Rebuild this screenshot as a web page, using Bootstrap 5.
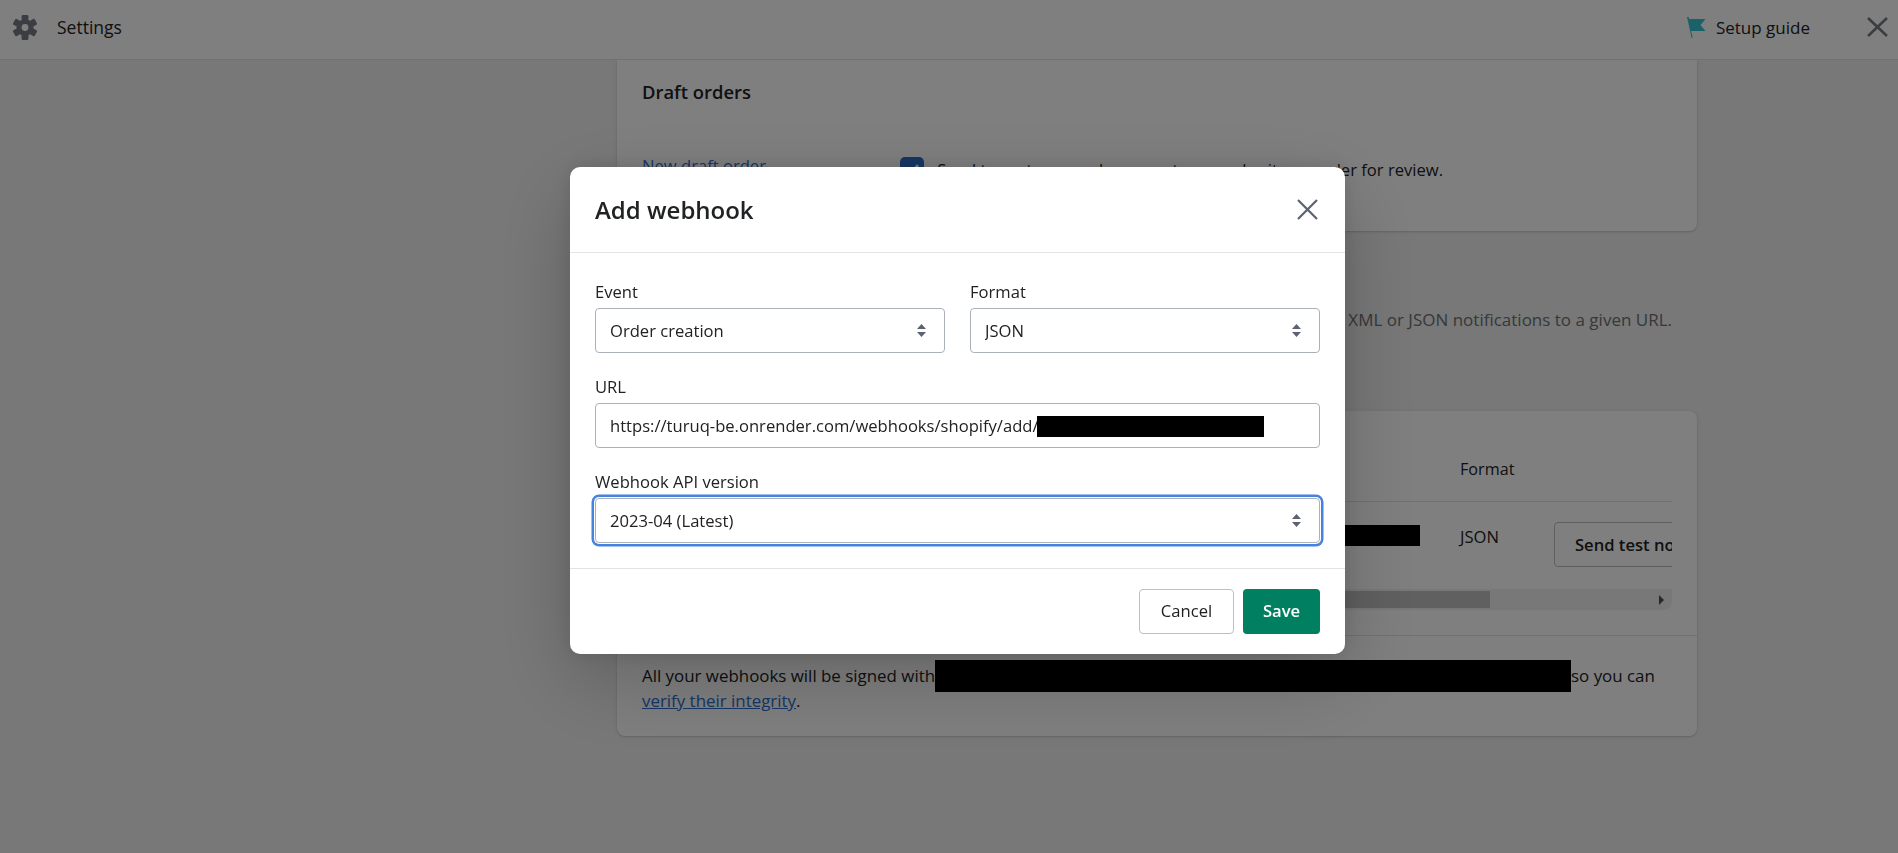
<!DOCTYPE html>
<html lang="en">
<head>
    <meta charset="UTF-8">
    <meta name="viewport" content="width=device-width, initial-scale=1.0">
    <title>Settings</title>
    <link href="https://cdn.jsdelivr.net/npm/bootstrap@5.3.3/dist/css/bootstrap.min.css" rel="stylesheet">
    <style>
        body {
            background: #f0f0f0;
            color: #202223;
            font-family: "Open Sans", "Liberation Sans", sans-serif;
            font-size: 16.6px;
            line-height: 25px;
            overflow: hidden;
            height: 100vh;
        }
        .top-bar {
            height: 60px;
            background: #fff;
            border-bottom: 1px solid #e1e3e5;
            padding: 0 10px 5px 13px;
            position: relative;
            z-index: 1;
        }
        .top-title { margin-left: 20px; font-size: 17.5px; }
        .setup-link { margin-right: 57px; font-size: 17px; }
        .setup-link svg { margin-right: 10px; }
        .settings-col { margin-left: 617px; width: 1080px; }
        .pane {
            background: #fff;
            box-shadow: 0 0 5px rgba(23, 24, 24, .05), 0 1px 2px rgba(0, 0, 0, .15);
            border-radius: 8px;
        }
        .pane-draft { height: 171px; padding: 19px 25px; border-radius: 0 0 8px 8px; }
        .pane-title { font-size: 18.4px; font-weight: 600; line-height: 25px; }
        .draft-row { margin-top: 49px; white-space: nowrap; }
        .draft-link { width: 258px; color: #2c6ecb; }
        .draft-check {
            width: 24px;
            height: 24px;
            border-radius: 5px;
            background: #2c6ecb;
            margin-right: 11px;
            margin-top: 4px;
            flex: none;
            line-height: 0;
        }
        .draft-copy { margin-top: 4px; width: 508px; text-align: right; }
        .intro-band { height: 180px; padding: 76px 25px 0; }
        .intro-copy { color: #6d7175; white-space: nowrap; font-size: 17px; }
        .pane-hooks { height: 325px; }
        .hook-table-wrap { margin: 0 25px; padding-top: 41px; overflow: hidden; height: 199px; position: relative; }
        .hook-table { table-layout: fixed; width: 1200px; margin: 0; --bs-table-bg: transparent; }
        .hook-table th, .hook-table td { padding: 0; border: 0; font-weight: 400; color: #202223; }
        .hook-table thead th { height: 49px; vertical-align: top; padding-top: 5px; border-bottom: 1px solid #e1e3e5; font-size: 16.2px; }
        .hook-table tbody td { padding-top: 22px; vertical-align: top; }
        .hook-table tbody td.cell-url { padding-top: 23px; padding-right: 40px; text-align: right; }
        .hook-table tbody td.cell-send { padding-top: 20px; }
        .redact-cell { display: inline-block; width: 300px; height: 21px; background: #000; vertical-align: top; }
        .send-btn {
            width: 240px;
            height: 45px;
            border: 1px solid #babfc3;
            border-radius: 4px;
            background: #fff;
            font-weight: 600;
            font-size: 16.6px;
            color: #202223;
            text-align: left;
            padding: 2px 20px 0;
            white-space: nowrap;
        }
        .fake-scroll {
            position: absolute;
            left: 0;
            right: 0;
            bottom: 0;
            height: 21px;
            background: #f1f1f1;
            border-radius: 0 0 8px 0;
            padding: 2px 0;
        }
        .fake-thumb { width: 848px; height: 17px; background: #c1c1c1; }
        .fake-arrow {
            position: absolute;
            right: 8px;
            top: 6px;
            border-left: 5px solid #505050;
            border-top: 5px solid transparent;
            border-bottom: 5px solid transparent;
        }
        .signed-note { border-top: 1px solid #e1e3e5; margin-top: 25px; padding: 27px 25px 0; font-size: 16.9px; line-height: 25px; white-space: nowrap; }
        .redact-key { display: inline-block; width: 636px; height: 32px; margin: -3.5px 0; background: #000; vertical-align: top; }
        .signed-note a { color: #2c6ecb; }

        .modal-dialog.hook-dialog { max-width: none; width: 775px; margin: 167px 0 0 570px; }
        .hook-modal {
            border: 0;
            border-radius: 10px;
            box-shadow: 0 26px 80px rgba(0, 0, 0, .2), 0 0 20px rgba(0, 0, 0, .12);
            font-size: 16.6px;
            line-height: 24px;
        }
        .hook-modal .modal-header { height: 86px; padding: 0 25px; border-bottom: 1px solid #e1e3e5; }
        .hook-modal .modal-title { font-size: 24px; font-weight: 600; color: #202223; line-height: 32px; }
        .hook-close { line-height: 0; margin-right: 2px; }
        .hook-modal .modal-body { padding: 27px 25px 25px; }
        .form-pair { gap: 25px; }
        .hook-label { display: block; margin: 0 0 4px; color: #202223; line-height: 24px; }
        .hook-field {
            height: 45px;
            border: 1px solid #abb1ba;
            border-radius: 4px;
            color: #202223;
            font-size: 16.6px;
            line-height: 24px;
            padding: 0 40px 0 14px;
        }
        select.hook-field {
            background-image: url("data:image/svg+xml,%3Csvg xmlns='http://www.w3.org/2000/svg' viewBox='0 0 9 13'%3E%3Cpath fill='%235c6270' d='M4.5 0 9 5H0zM4.5 13 0 8h9z'/%3E%3C/svg%3E");
            background-size: 9px 13px;
            background-position: right 18px center;
        }
        .hook-field:focus { border-color: #abb1ba; box-shadow: none; }
        select.hook-focus, select.hook-focus:focus { box-shadow: 0 0 0 1px #fff, 0 0 0 3.5px #4583de; border-color: #abb1ba; }
        .field-gap { margin-top: 22px; }
        .redact-url { position: absolute; left: 442px; top: 13px; width: 227px; height: 21px; background: #000; }
        .hook-modal .modal-footer { height: 86px; padding: 0 25px; border-top: 1px solid #e1e3e5; gap: 9px; }
        .hook-modal .modal-footer > * { margin: 0; }
        .btn-cancel {
            width: 95px;
            height: 45px;
            padding: 0;
            border: 1px solid #babfc3;
            border-radius: 4px;
            background: #fff;
            color: #202223;
            font-size: 16.6px;
            font-weight: 500;
        }
        .btn-save {
            width: 77px;
            height: 45px;
            padding: 0;
            border: 0;
            border-radius: 4px;
            background: #008060;
            color: #fff;
            font-size: 16.6px;
            font-weight: 600;
        }
    </style>
</head>
<body>
    <header class="top-bar d-flex align-items-center">
        <svg width="24" height="25" viewBox="0 0 24 25" aria-hidden="true">
            <g fill="#777b87">
                <circle cx="12" cy="12.5" r="8.6"/>
                <rect x="8.6" y="0" width="6.8" height="5" rx="1.2"/>
                <rect x="8.6" y="0" width="6.8" height="5" rx="1.2" transform="rotate(60 12 12.5)"/>
                <rect x="8.6" y="0" width="6.8" height="5" rx="1.2" transform="rotate(120 12 12.5)"/>
                <rect x="8.6" y="0" width="6.8" height="5" rx="1.2" transform="rotate(180 12 12.5)"/>
                <rect x="8.6" y="0" width="6.8" height="5" rx="1.2" transform="rotate(240 12 12.5)"/>
                <rect x="8.6" y="0" width="6.8" height="5" rx="1.2" transform="rotate(300 12 12.5)"/>
            </g>
            <circle cx="12" cy="12.5" r="3.4" fill="#fff"/>
        </svg>
        <span class="top-title">Settings</span>
        <div class="setup-link ms-auto d-flex align-items-center">
            <svg width="19" height="21" viewBox="0 0 19 21" aria-hidden="true">
                <path fill="#35c4ce" d="M0 0 1.6 0 2.2 2H18.5L13.5 8 18.5 14H4L5.8 20.5 4.6 20.8z"/>
            </svg>
            <span>Setup guide</span>
        </div>
        <svg width="21" height="20" viewBox="0 0 21 20" aria-hidden="true">
            <path stroke="#777b87" stroke-width="2.6" fill="none" d="M1 1 20 19M20 1 1 19"/>
        </svg>
    </header>

    <main class="settings-col">
        <section class="pane pane-draft">
            <div class="pane-title">Draft orders</div>
            <div class="draft-row d-flex">
                <a href="#" class="draft-link text-decoration-none">New draft order</a>
                <span class="draft-check">
                    <svg width="24" height="24" viewBox="0 0 24 24" aria-hidden="true">
                        <path stroke="#fff" stroke-width="2.6" fill="none" d="M6 12.5 10.5 17 18 8"/>
                    </svg>
                </span>
                <span class="draft-copy">Send to customers when a customer submits an order for review.</span>
            </div>
        </section>

        <div class="intro-band">
            <p class="intro-copy text-end m-0">Subscribe to events for your products and orders by creating webhooks that push XML or JSON notifications to a given URL.</p>
        </div>

        <section class="pane pane-hooks">
            <div class="hook-table-wrap">
                <table class="table hook-table">
                    <colgroup>
                        <col style="width: 300px">
                        <col style="width: 518px">
                        <col style="width: 94px">
                        <col>
                    </colgroup>
                    <thead>
                        <tr><th>Event</th><th>Callback URL</th><th>Format</th><th></th></tr>
                    </thead>
                    <tbody>
                        <tr>
                            <td>Order creation</td>
                            <td class="cell-url"><span class="redact-cell"></span></td>
                            <td>JSON</td>
                            <td class="cell-send"><button type="button" class="btn send-btn">Send test notification</button></td>
                        </tr>
                    </tbody>
                </table>
                <div class="fake-scroll"><div class="fake-thumb"></div><span class="fake-arrow"></span></div>
            </div>
            <div class="signed-note">All your webhooks will be signed with<span class="redact-key"></span>so you can<br><a href="#">verify their integrity</a>.</div>
        </section>
    </main>

    <div class="modal-backdrop fade show"></div>
    <div class="modal fade show d-block" tabindex="-1">
        <div class="modal-dialog hook-dialog">
            <div class="modal-content hook-modal">
                <div class="modal-header">
                    <h5 class="modal-title">Add webhook</h5>
                    <button type="button" class="btn p-0 border-0 ms-auto hook-close" aria-label="Close">
                        <svg width="21" height="21" viewBox="0 0 21 21" aria-hidden="true">
                            <path stroke="#5c6270" stroke-width="2.2" fill="none" d="M1 1 20 20M20 1 1 20"/>
                        </svg>
                    </button>
                </div>
                <div class="modal-body">
                    <div class="d-flex form-pair">
                        <div class="w-50">
                            <label class="hook-label" for="hook-event">Event</label>
                            <select id="hook-event" class="form-select hook-field"><option>Order creation</option></select>
                        </div>
                        <div class="w-50">
                            <label class="hook-label" for="hook-format">Format</label>
                            <select id="hook-format" class="form-select hook-field"><option>JSON</option></select>
                        </div>
                    </div>
                    <div class="field-gap">
                        <label class="hook-label" for="hook-url">URL</label>
                        <div class="position-relative">
                            <input id="hook-url" class="form-control hook-field" value="https://turuq-be.onrender.com/webhooks/shopify/add/">
                            <span class="redact-url"></span>
                        </div>
                    </div>
                    <div class="field-gap">
                        <label class="hook-label" for="hook-version">Webhook API version</label>
                        <select id="hook-version" class="form-select hook-field hook-focus"><option>2023-04 (Latest)</option></select>
                    </div>
                </div>
                <div class="modal-footer">
                    <button type="button" class="btn btn-cancel">Cancel</button>
                    <button type="button" class="btn btn-save">Save</button>
                </div>
            </div>
        </div>
    </div>

    <script src="https://cdn.jsdelivr.net/npm/bootstrap@5.3.3/dist/js/bootstrap.bundle.min.js"></script>
</body>
</html>
